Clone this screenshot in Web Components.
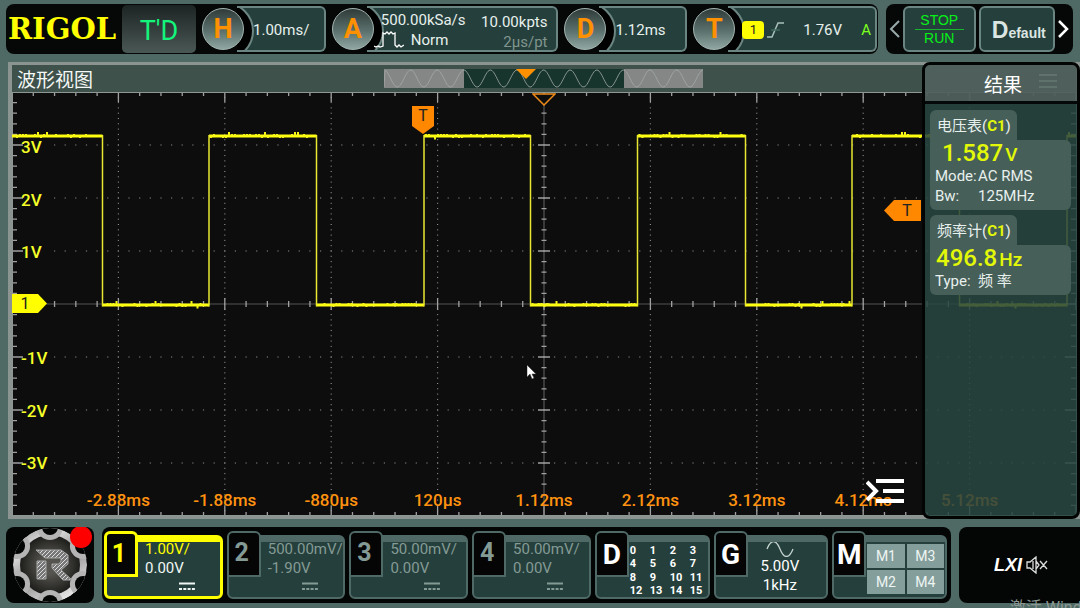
<!DOCTYPE html>
<html lang="zh-CN">
<head>
<meta charset="utf-8">
<title>RIGOL</title>
<style>
html{height:100%}
body{margin:0;min-height:100vh;display:flex;background:#4f6a64;font-family:Roboto,"Noto Sans CJK SC",sans-serif;font-size:15px;color:#e8f0ee;
--line:#6b8682;--card:#25403c;--yellow:#ffff00;--orange:#ff9000}
scope-app{flex:1}
</style>
</head>
<body>
<scope-app></scope-app>
<script>
const define = (name, html, setup) => customElements.define(name, class extends HTMLElement {
  constructor(){ super(); this.attachShadow({mode:'open'}); }
  connectedCallback(){
    if (this.shadowRoot.childNodes.length) return;
    const t = document.createElement('template');
    t.innerHTML = '<style>*{box-sizing:border-box}button{font:inherit;color:inherit;background:none;border:0;padding:0;margin:0;text-align:inherit}</style>' + html;
    this.shadowRoot.append(t.content.cloneNode(true));
    if (setup) setup(this, this.shadowRoot);
  }
});

/* Round letter button joined to a readout box */
define('knob-readout', `<style>
:host{display:flex;min-width:0;height:46px;align-items:center}
.knob{flex:none;width:42px;height:42px;border-radius:50%;border:1px solid #a3b5b1;background:linear-gradient(#303b39,#5f7672 60%,#8fa6a1);
color:var(--orange);font-size:27px;font-weight:700;line-height:40px;text-align:center;z-index:1}
.box{position:relative;flex:1;min-width:0;height:46px;margin-left:-7px;border:2px solid var(--line);border-left:0;border-radius:0 6px 6px 0;background:var(--card);overflow:hidden;display:flex;align-items:center}
.box::before{content:"";position:absolute;left:-41px;top:-6px;width:54px;height:54px;border-radius:50%;border:2px solid var(--line);background:#000}
.in{flex:1;position:relative;padding:2px 0 0 16px;white-space:nowrap}
</style><button class="knob"></button><div class="box"><div class="in"><slot></slot></div></div>`,
(el, r) => r.querySelector('.knob').textContent = el.getAttribute('letter'));

define('acquire-info', `<style>
:host{display:flex;justify-content:space-between;padding:2px 9px 0 0;line-height:20px}
.l{margin-left:-3px}.n{display:flex;align-items:center;margin-left:-6px;gap:7px}.r{text-align:right;padding-top:2px}.dim{color:#81958f}
</style><div class="l"><div style="padding-left:1px">500.00kSa/s</div><div class="n"><svg width="30" height="18" viewBox="0 0 30 18" fill="none" stroke="#fff" stroke-width="1.3"><path d="M0 15l2 1 2-1 2 1 3-1V2l2 1 2-2 2 2 2-2 2 2 2-1v12l2 2 2-2 2 2 3-2"/></svg><span>Norm</span></div></div>
<div class="r"><div>10.00kpts</div><div class="dim">2µs/pt</div></div>`);

define('trigger-info', `<style>
:host{display:flex;align-items:center;margin-left:-2px;padding-right:4px}
.b{width:22px;height:18px;border-radius:4px;background:var(--yellow);color:#222;font-size:13px;line-height:18px;text-align:center}
svg{margin-left:3px}.v{margin-left:19px;flex:1}.a{color:#7dff1e}
</style><span class="b">1</span><svg width="17" height="18" viewBox="0 0 17 18" fill="none" stroke="#a9c0bb" stroke-width="1.5"><path d="M0 16h5L11 2h6"/><path d="M4 9h9" stroke="#3f6a5f"/></svg><span class="v">1.76V</span><span class="a">A</span>`);

define('top-bar', `<style>
:host{display:flex;gap:8px;padding:0 7px 0 6px}
.bar{height:50px;background:#060808;border-radius:8px;display:flex;align-items:center}
.main{flex:1;gap:6px;padding-right:1px;min-width:0}
.logo{width:110px;padding-left:2px;color:var(--yellow);font:700 29px "DejaVu Serif",serif;line-height:52px}
.td{width:74px;height:48px;border-radius:5px;background:linear-gradient(#1c2423,#4a5855);color:#14f57c;font-size:27px;line-height:52px;text-align:center}
.side{width:187px;padding:0 4px 0 3px;gap:3px}
.arrow{width:11px;height:46px;flex:none;display:flex;align-items:center;justify-content:center}
.btn{height:46px;border:2px solid var(--line);border-radius:6px;background:var(--card);flex:1;text-align:center}
.run{color:#08f018;font:14px/17px "Liberation Sans",sans-serif}
.run span{display:block;margin:0 10px}.run span+span{border-top:1px solid #1bb32d}
.def{font:700 14px "Liberation Sans",sans-serif;color:#dbe6e3;flex:1;padding:2px 0 0 4px}.def b{font-size:23px}
</style>
<header class="bar main"><div class="logo">RIGOL</div><div class="td">T'D</div>
<knob-readout letter="H" style="flex:124">1.00ms/</knob-readout>
<knob-readout letter="A" style="flex:227"><acquire-info></acquire-info></knob-readout>
<knob-readout letter="D" style="flex:123">1.12ms</knob-readout>
<knob-readout letter="T" style="flex:184"><trigger-info></trigger-info></knob-readout></header>
<nav class="bar side"><button class="arrow" aria-label="previous"><svg width="11" height="20" fill="none" stroke="#9aa" stroke-width="2"><path d="M10 2L2 10l8 8"/></svg></button>
<button class="btn run"><span>STOP</span><span>RUN</span></button><button class="btn def"><b>D</b>efault</button>
<button class="arrow" aria-label="next"><svg width="11" height="20" fill="none" stroke="#fff" stroke-width="2.5"><path d="M1 2l8 8-8 8"/></svg></button></nav>`);

define('memory-strip', `<style>:host{display:block;width:319px;height:19px}svg{display:block;width:100%}</style><svg viewBox="0 0 319 19" height="19"></svg>`,
(el, r) => {
  let d = 'M0 18';
  for (let x = 1; x <= 319; x++) d += 'L' + x + ' ' + (9.5 + 8.5 * Math.cos(x / 26.6 * 2 * Math.PI + Math.PI)).toFixed(1);
  r.querySelector('svg').innerHTML = '<path fill="#858786" d="M0 0h319v19H0z"/><path fill="#17352d" d="M80 0h160v19H80z"/><path d="' + d + '" fill="none" stroke="#a2aaa7" stroke-opacity=".8"/><path fill="#ff9000" d="M132 0h20l-10 10z"/>';
});

define('wave-graph', `<style>
:host{display:block;position:relative;background:#0d0d0d}
.plot{position:absolute;inset:0;width:100%;height:100%}
.x,.y{position:absolute;inset:0;display:grid;font-size:17px;font-weight:500;line-height:20px;pointer-events:none}
.x{grid-template-columns:1fr repeat(9,2fr) 1fr;align-items:end;color:#ff9210;text-align:center;padding-bottom:6px}
.x span:first-child{grid-column:2}
.y{grid-template-rows:1fr repeat(3,2fr) 2fr repeat(3,2fr) 1fr;align-items:center;color:#f5ff28;padding:2px 0 0 9px}
.y span:nth-child(1){grid-row:2}.y span:nth-child(4){grid-row:6}
.mark{position:absolute;display:block}
.mark text{font:16px Roboto,sans-serif;fill:#222;text-anchor:middle}
</style><svg class="plot" viewBox="0 0 1064 424" preserveAspectRatio="none"></svg>
<div class="y"><span>3V</span><span style="grid-row:3">2V</span><span style="grid-row:4">1V</span><span>-1V</span><span style="grid-row:7">-2V</span><span style="grid-row:8">-3V</span></div>
<div class="x"><span>-2.88ms</span><span>-1.88ms</span><span>-880µs</span><span>120µs</span><span>1.12ms</span><span>2.12ms</span><span>3.12ms</span><span>4.12ms</span><span>5.12ms</span></div>
<svg class="mark" style="left:0;top:50%;margin-top:-10px" width="35" height="19"><path fill="#ff0" d="M0 0h26l9 9.500-9 9.500H0z"/><text x="13" y="15">1</text></svg>
<svg class="mark" style="left:38.720%;top:14px;margin-left:-12px" width="22" height="28"><path fill="#ff8800" d="M0 0h22v20l-11 8L0 20z"/><text x="11" y="15">T</text></svg>
<svg class="mark" style="left:50%;top:1px;margin-left:-12px" width="24" height="13" fill="#0d0d0d" stroke="#f08c1c" stroke-width="1.5"><path d="M1 1h22L12 12z"/></svg>
<svg class="mark" style="right:155px;top:108px" width="37" height="21"><path fill="#ff8800" d="M0 10.500L10 0h27v21H10z"/><text x="23" y="16">T</text></svg>
<svg class="mark" style="left:48.400%;top:64.400%" width="9" height="14"><path fill="#fff" stroke="#333" stroke-width=".5" d="M0 0v12l3-3 2 5 2-1-2-4h4z"/></svg>
<svg class="mark" style="right:171px;bottom:12px" width="39" height="26" fill="none" stroke="#fff" stroke-width="4"><path d="M10 3h28M17 13h21M10 23h28M1 4l9 9-9 9"/></svg>`,
(el, r) => {
  let tick = '', dots = '', mid = '';
  for (let i = 0; i <= 50; i++) {
    const x = i * 21.28, L = i % 5 ? 4 : 10;
    tick += `M${x} 0v${L}M${x} 424v-${L}`;
    if (i > 1) mid += `M${x} ${i % 5 ? 209 : 206}v${i % 5 ? 6 : 12}`;
  }
  for (let j = 0; j <= 40; j++) {
    const y = j * 10.6, L = j % 5 ? 5 : 11;
    tick += `M0 ${y}h${L}M1064 ${y}h-${L}`;
    mid += `M${j % 5 ? 529.5 : 526} ${y}h${j % 5 ? 5 : 12}`;
  }
  for (let i = 1; i < 10; i++) if (i !== 5) for (let y = 5.3; y < 420; y += 5.3) dots += `M${i * 106.4 - .6} ${y.toFixed(1)}h1.200`;
  for (let j = 1; j < 8; j++) if (j !== 4) for (let x = 42.560; x < 1060; x += 10.64) dots += `M${(x - .6).toFixed(1)} ${j * 53}h1.200`;
  const edges = [0, 90.5, 197, 304.5, 412, 518.5, 625.5, 733.5, 840, 947.5, 1055, 1064];
  let flat = '', rise = '', fuzz = '', seed = 7;
  const rnd = () => (seed = seed * 16807 % 2147483647) / 2147483647;
  edges.slice(0, -1).forEach((a, k) => {
    const b = edges[k + 1], hi = k % 2 === 0, y = hi ? 44 : 213;
    flat += `M${a} ${y}H${b}`;
    if (k) rise += `M${a} 43V214.500`;
    for (let x = a + 2; x < b - 1; x += 3) if (rnd() > .45) {
      const up = rnd() > .3;
      fuzz += `M${x} ${y}v${up ? -2 - (rnd() > .88 ? 2 : 0) : 2 + (rnd() > .9 ? 1.5 : 0)}`;
    }
  });
  r.querySelector('.plot').innerHTML =
    `<path d="${dots}" stroke="#8b8b8b" fill="none"/><path d="M0 212H1064" stroke="#555"/><path d="M532 0V424" stroke="#666"/>
     <path d="${tick}${mid}" stroke="#a0a0a0" stroke-width="1.300"/><path d="M0 .500H1064M.500 0V424M0 423.500H1064" stroke="#8f9794"/>
     <path d="${flat}" stroke="#ffff10" stroke-width="3"/><path d="${fuzz}" stroke="#f5f518" stroke-width="2"/><path d="${rise}" stroke="#e8e832" stroke-width="1.500"/>`;
});

/* Tabbed card with a measurement and its settings */
define('measure-card', `<style>
:host{display:block;margin-right:2px}
.tab{width:87px;height:30px;background:#465f58;border-radius:6px 6px 0 0;padding:6px 0 0 7px;line-height:20px;white-space:nowrap}
.tab b{color:#e2f808}
.body{background:#465f58;border-radius:0 6px 6px 6px;padding:0 6px 4px}
.val{color:#e2f808;height:26px;font-size:24px;font-weight:500;line-height:27px;white-space:nowrap}.val small{font-size:19px;margin-left:2px}
.rows{display:grid;grid-template-columns:43px 1fr;line-height:20px;white-space:nowrap;margin-left:-1px}
</style><div class="tab"><slot name="name"></slot>(<b>C1</b>)</div><div class="body"><div class="val"><slot name="value"></slot><small><slot name="unit"></slot></small></div><div class="rows"><slot></slot></div></div>`);

define('result-panel', `<style>
:host{display:flex;flex-direction:column;width:158px;border:3px solid #030505;border-radius:8px;background:rgba(40,70,64,.87);overflow:hidden}
.head{height:39px;border-bottom:3px solid #050808;background:rgba(104,112,109,.6);display:grid;grid-template-columns:1fr auto 1fr;align-items:center;font-size:19px;color:#fff;padding-left:4px}
.head span{grid-column:2}
svg{margin:-4px 0 0 17px}
.list{display:flex;flex-direction:column;gap:5px;padding:6px 4px 0 5px}
</style><div class="head"><span>结果</span><svg width="18" height="16" stroke="#667973" stroke-width="1.500"><path d="M0 2h18M0 8h18M0 14h18"/></svg></div>
<div class="list"><measure-card><span slot="name">电压表</span><span slot="value" style="margin-left:6px">1.587</span><span slot="unit">V</span><span>Mode:</span><span>AC RMS</span><span>Bw:</span><span>125MHz</span></measure-card>
<measure-card><span slot="name">频率计</span><span slot="value">496.8</span><span slot="unit">Hz</span><span>Type:</span><span>频 率</span></measure-card></div>`);

define('scope-view', `<style>
:host{display:flex;flex-direction:column;position:relative;margin-left:8px;border:solid #8c9491;border-width:3px 4px 3px 4px}
.title{height:27px;background:#3e514a;display:flex;align-items:center;padding-left:5px;font-size:19px;color:#f4f8f6}
memory-strip{margin-left:291px}wave-graph{flex:1;min-height:300px}
result-panel{position:absolute;top:-3px;right:-4px;bottom:-3px}
</style><div class="title"><span>波形视图</span><memory-strip></memory-strip></div><wave-graph></wave-graph><result-panel></result-panel>`);

/* Bottom source card: black letter tab over a framed body */
define('source-card', `<style>
:host{display:block;position:relative;height:68px;padding-top:4px;min-width:0;--edge:#4f6a66;color:#849a95}
:host([on]){--edge:#ffff00;color:#f0f6f4}
:host([lit]){color:#fff}
.body{display:flex;flex-direction:column;justify-content:flex-start;align-items:stretch;width:100%;height:64px;border:2px solid var(--edge);border-top-width:7px;border-radius:6px;background:var(--card);padding-left:39px;white-space:nowrap;overflow:hidden}
.tab{position:absolute;left:0;top:0;width:34px;height:46px;border:2px solid var(--edge);border-radius:6px 6px 0 0;background:#050505;font-weight:700;font-size:25px;line-height:40px;text-align:center;padding-right:4px}
:host([on]) .body,:host([on]) .tab{border-width:3px}:host([on]) .body{border-top-width:7px;padding-left:38px}
:host([lit]) .tab{font-size:28px;color:#fff;line-height:44px;padding:0}
:host([on]) .tab{color:#ff0}
:host([lit]) .body{padding-left:32px}
</style><button class="body"><slot></slot></button><div class="tab"></div>`,
(el, r) => r.querySelector('.tab').textContent = el.getAttribute('letter'));

define('channel-info', `<style>
:host{display:block;line-height:19px;margin-top:-2px}:host([on]) .s{color:#ff0}
svg{display:block;margin:4px 0 0 34px}
</style><div class="s"><slot name="scale"></slot></div><div><slot name="offset"></slot></div>
<svg width="16" height="9" stroke="currentColor" stroke-width="2"><path d="M0 1.500h16"/><path d="M0 7h16" stroke-dasharray="3 1.300"/></svg>`);

define('digital-grid', `<style>:host{display:grid;grid-template-columns:repeat(4,20px);font:700 11px/13px Roboto,sans-serif;padding:2px 0 0 1px;height:55px}</style>`,
(el, r) => { for (let i = 0; i < 16; i++) { const s = document.createElement('span'); s.textContent = i; r.append(s); } });

define('math-grid', `<style>:host{display:grid;grid-template-columns:1fr 1fr;grid-auto-rows:24px;gap:2px;margin:2px 1px 0 1px}
span{background:#849e9b;color:#eef5f3;font-size:14px;line-height:25px;text-align:center}</style><span>M1</span><span>M3</span><span>M2</span><span>M4</span>`);

define('home-gear', `<style>:host{display:block;width:88px;height:76px;background:#040505;border-radius:8px}svg{display:block}</style>
<button aria-label="menu"><svg width="88" height="76" viewBox="0 0 88 76"></svg></button>`,
(el, r) => {
  const ring = (rad, fill) => [30, 90, 150, 210, 270, 330].map(a => `<circle cx="${44 + 38 * Math.cos(a * Math.PI / 180)}" cy="${38 + 38 * Math.sin(a * Math.PI / 180)}" r="${rad}" fill="${fill}"/>`).join('');
  r.querySelector('svg').innerHTML = `<defs><linearGradient id="s" x2=".6" y2="1"><stop stop-color="#8e8e8e"/><stop offset=".3" stop-color="#dedede"/><stop offset=".6" stop-color="#909090"/><stop offset="1" stop-color="#e4e4e4"/></linearGradient>
  <radialGradient id="d"><stop offset=".3" stop-color="#55544e"/><stop offset="1" stop-color="#1d1d1b"/></radialGradient>
  <pattern id="p" width="4" height="4" patternUnits="userSpaceOnUse"><path fill="#777" d="M0 0h4v4H0z"/><path stroke="#ddd" d="M0 4L4 0"/></pattern><clipPath id="c"><circle cx="44" cy="38" r="37"/></clipPath></defs>
  <g clip-path="url(#c)"><circle cx="44" cy="38" r="37" fill="url(#s)"/><circle cx="44" cy="38" r="30" fill="url(#d)"/>${ring(13, '#b4b4b4')}${ring(8, '#040505')}</g>
  <path d="M30 23h25l7 5v9l-7 6 11 10h-9L46 41v-4h7l2-3v-3H39zM31 34h9v18h-9z" fill="url(#p)" stroke="#a8a8a8"/><circle cx="75" cy="10" r="11" fill="#f00"/>`;
});

define('bottom-bar', `<style>
:host{display:flex;gap:8px;padding-left:6px}
.sources{flex:1;min-width:0;height:76px;background:#040505;border-radius:8px;display:flex;gap:4px;padding:4px 4px 4px 2px}
.ch{flex:119}.w{flex:115}
.sys{width:121px;height:76px;background:#040505;border-radius:8px 0 0 8px;display:flex;align-items:center;gap:8px;padding-left:35px}
.sys i{font:italic 700 18px "Liberation Sans",sans-serif;color:#fff}
.sys svg{margin-left:-4px}
.gen{text-align:center;line-height:19px;padding-right:14px}.gen svg{display:block;margin:0 auto}
</style>
<home-gear></home-gear>
<section class="sources">
<source-card class="ch" letter="1" on><channel-info on><span slot="scale">1.00V/</span><span slot="offset">0.00V</span></channel-info></source-card>
<source-card class="ch" letter="2"><channel-info><span slot="scale">500.00mV/</span><span slot="offset">-1.90V</span></channel-info></source-card>
<source-card class="ch" letter="3"><channel-info><span slot="scale">50.00mV/</span><span slot="offset">0.00V</span></channel-info></source-card>
<source-card class="ch" letter="4"><channel-info><span slot="scale">50.00mV/</span><span slot="offset">0.00V</span></channel-info></source-card>
<source-card class="w" letter="D" lit><digital-grid></digital-grid></source-card>
<source-card class="w" letter="G" lit><div class="gen"><svg width="28" height="15" viewBox="0 1 28 15" fill="none" stroke="#c3d2ce" stroke-width="1.300"><path d="M1 8C5-2 10-2 14 8s9 10 13 0"/></svg><div>5.00V</div><div>1kHz</div></div></source-card>
<source-card class="w" letter="M" lit><math-grid></math-grid></source-card>
</section>
<div class="sys"><i>LXI</i><svg width="22" height="18" viewBox="0 0 22 18" fill="none" stroke="#ddd" stroke-width="1.300"><path d="M1 6v6h3l6 5V1L4 6zM7 5v8M10 5l3 4-3 4M14 5l7 8M21 5l-7 8"/></svg></div>`);

define('scope-app', `<style>
:host{display:flex;flex-direction:column;gap:8px;padding:4px 0 5px;position:relative;overflow:hidden;box-sizing:border-box;min-width:0}
scope-view{flex:1}
.wm{position:absolute;left:93.500%;top:100%;margin-top:-10px;color:#8b9894;font-size:16px;line-height:20px;white-space:nowrap}
</style><top-bar></top-bar><scope-view></scope-view><bottom-bar></bottom-bar><div class="wm">激活 Windows</div>`);
</script>
</body>
</html>
